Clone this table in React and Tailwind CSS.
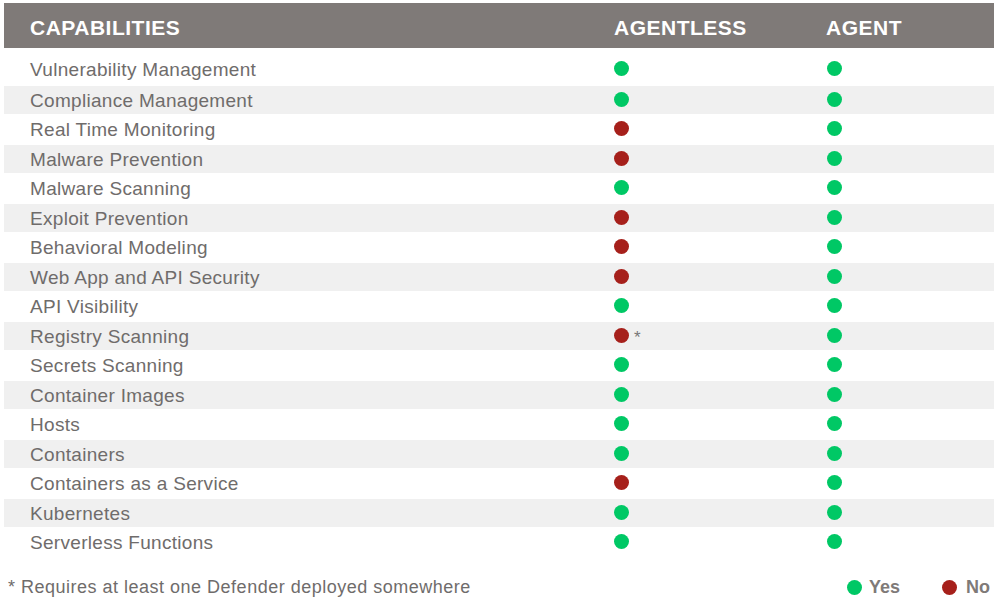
const rows = [
  ["Vulnerability Management", true, true],
  ["Compliance Management", true, true],
  ["Real Time Monitoring", false, true],
  ["Malware Prevention", false, true],
  ["Malware Scanning", true, true],
  ["Exploit Prevention", false, true],
  ["Behavioral Modeling", false, true],
  ["Web App and API Security", false, true],
  ["API Visibility", true, true],
  ["Registry Scanning", false, true, true],
  ["Secrets Scanning", true, true],
  ["Container Images", true, true],
  ["Hosts", true, true],
  ["Containers", true, true],
  ["Containers as a Service", false, true],
  ["Kubernetes", true, true],
  ["Serverless Functions", true, true],
];

function Dot({ yes }) {
  return (
    <span
      className={
        "inline-block w-[15px] h-[15px] rounded-full " +
        (yes ? "bg-[#00c865]" : "bg-[#a6201b]")
      }
    />
  );
}

export default function App() {
  return (
    <div className="w-[999px] h-[611px] bg-white font-['Liberation_Sans',Arial,sans-serif] text-[#6f6c6b]">
      <div className="ml-[4px] w-[990px] pt-[3px]">
        {/* header */}
        <div className="flex items-center h-[45px] pt-[5px] bg-[#7f7a78] text-white font-bold text-[21px] tracking-[0.5px]">
          <div className="w-[610px] pl-[26px]">CAPABILITIES</div>
          <div className="w-[212px]">AGENTLESS</div>
          <div className="flex-1">AGENT</div>
        </div>

        {/* rows */}
        {rows.map(([label, agentless, agent, star], i) => {
          const grey = i % 2 === 1;
          const h = i === 0 ? "h-[38px] pt-[5px]" : grey ? "h-[28px]" : "h-[31px]";
          return (
            <div
              key={label}
              className={"flex items-center text-[19px] tracking-[0.3px] " + h + (grey ? " bg-[#f0f0f0]" : "")}
            >
              <div className="w-[610px] pl-[26px] leading-none">{label}</div>
              <div className="w-[212px] flex items-center gap-[5px] -mt-[2px]">
                <Dot yes={agentless} />
                {star && <span className="text-[17px] leading-none text-[#777] mt-[4px]">*</span>}
              </div>
              <div className="flex-1 flex items-center pl-[1px] -mt-[2px]">
                <Dot yes={agent} />
              </div>
            </div>
          );
        })}
      </div>

      {/* footer */}
      <div className="flex items-center justify-between mt-[16px] pl-[8px] pr-[9px]">
        <div className="text-[18px] tracking-[0.5px]">* Requires at least one Defender deployed somewhere</div>
        <div className="flex items-center font-bold text-[18px] text-[#7f7a78]">
          <Dot yes={true} />
          <span className="ml-[7px]">Yes</span>
          <span className="ml-[42px] flex items-center"><Dot yes={false} /></span>
          <span className="ml-[9px]">No</span>
        </div>
      </div>
    </div>
  );
}
